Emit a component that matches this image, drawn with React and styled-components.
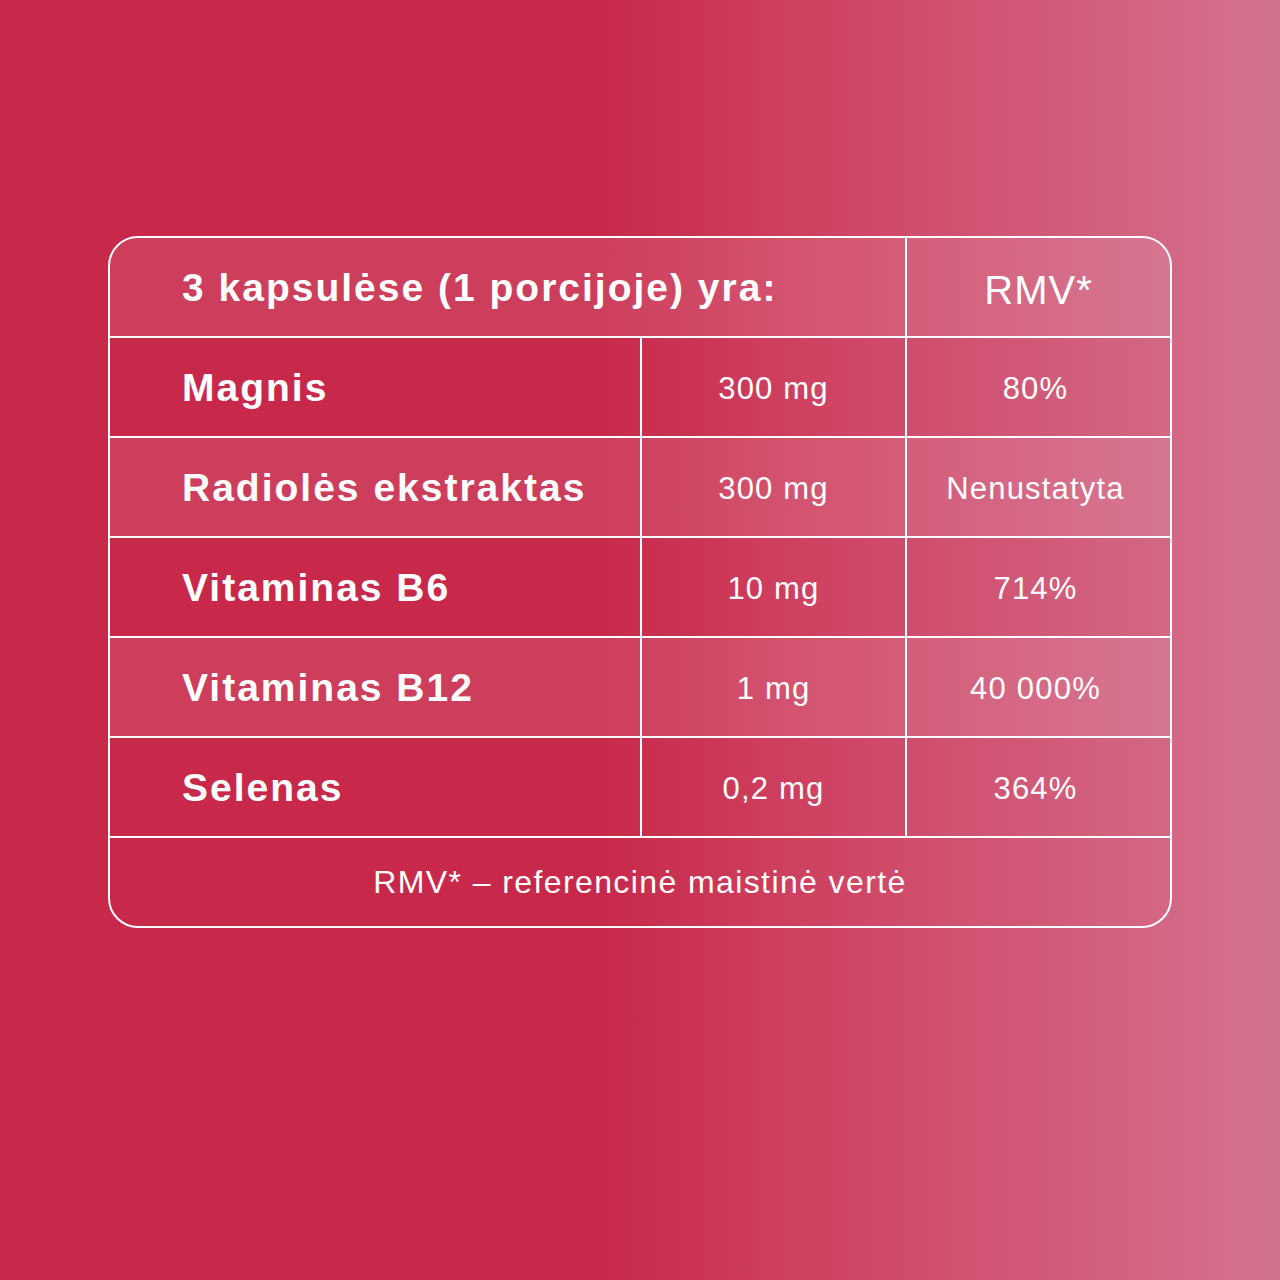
import styled, { createGlobalStyle } from "styled-components";

const rows = [
	{ name: "Magnis", amount: "300 mg", rmv: "80%" },
	{ name: "Radiolės ekstraktas", amount: "300 mg", rmv: "Nenustatyta" },
	{ name: "Vitaminas B6", amount: "10 mg", rmv: "714%" },
	{ name: "Vitaminas B12", amount: "1 mg", rmv: "40 000%" },
	{ name: "Selenas", amount: "0,2 mg", rmv: "364%" },
];

export default function App() {
	return (
		<>
			<GlobalStyle />
			<Page>
				<Table>
					<Row $light>
						<TitleCell>3 kapsulėse (1 porcijoje) yra:</TitleCell>
						<RmvHead>RMV*</RmvHead>
					</Row>

					{rows.map((row, i) => (
						<Row key={row.name} $light={i % 2 === 1}>
							<NameCell>{row.name}</NameCell>
							<ValueCell>{row.amount}</ValueCell>
							<ValueCell $last>{row.rmv}</ValueCell>
						</Row>
					))}

					<Footer>RMV* – referencinė maistinė vertė</Footer>
				</Table>
			</Page>
		</>
	);
}

const GlobalStyle = createGlobalStyle`
	* {
		box-sizing: border-box;
	}

	body {
		margin: 0;
		font-family: "Liberation Sans", Arial, Helvetica, sans-serif;
	}
`;

const Page = styled.main`
	width: 1280px;
	height: 1280px;
	padding-top: 236px;
	display: flex;
	justify-content: center;
	align-items: flex-start;
	background: linear-gradient(
		90deg,
		#c8284a 0%,
		#c8294a 47%,
		#ce4060 62%,
		#d15877 80%,
		#d4738e 100%
	);
`;

const Table = styled.section`
	width: 1064px;
	border: 2px solid #ffffff;
	border-radius: 30px;
	overflow: hidden;
	color: #ffffff;
`;

const Row = styled.div`
	display: grid;
	grid-template-columns: 530px 265px 265px;
	height: 100px;
	border-bottom: 2px solid #ffffff;
	background: ${({ $light }) =>
		$light ? "rgba(255, 255, 255, 0.1)" : "transparent"};
`;

const NameCell = styled.div`
	display: flex;
	align-items: center;
	padding-left: 72px;
	padding-top: 2px;
	font-size: 39px;
	font-weight: 700;
	letter-spacing: 2px;
`;

const TitleCell = styled(NameCell)`
	grid-column: span 2;
`;

const ValueCell = styled.div`
	display: flex;
	align-items: center;
	justify-content: center;
	border-left: 2px solid #ffffff;
	padding-top: 4px;
	padding-right: ${({ $last }) => ($last ? "6px" : "0")};
	font-size: 31px;
	letter-spacing: 1.2px;
`;

const RmvHead = styled.div`
	display: flex;
	align-items: center;
	justify-content: center;
	border-left: 2px solid #ffffff;
	padding-top: 6px;
	font-size: 40px;
	letter-spacing: 1px;
`;

const Footer = styled.div`
	display: flex;
	align-items: center;
	justify-content: center;
	height: 88px;
	font-size: 32px;
	letter-spacing: 1.4px;
`;
